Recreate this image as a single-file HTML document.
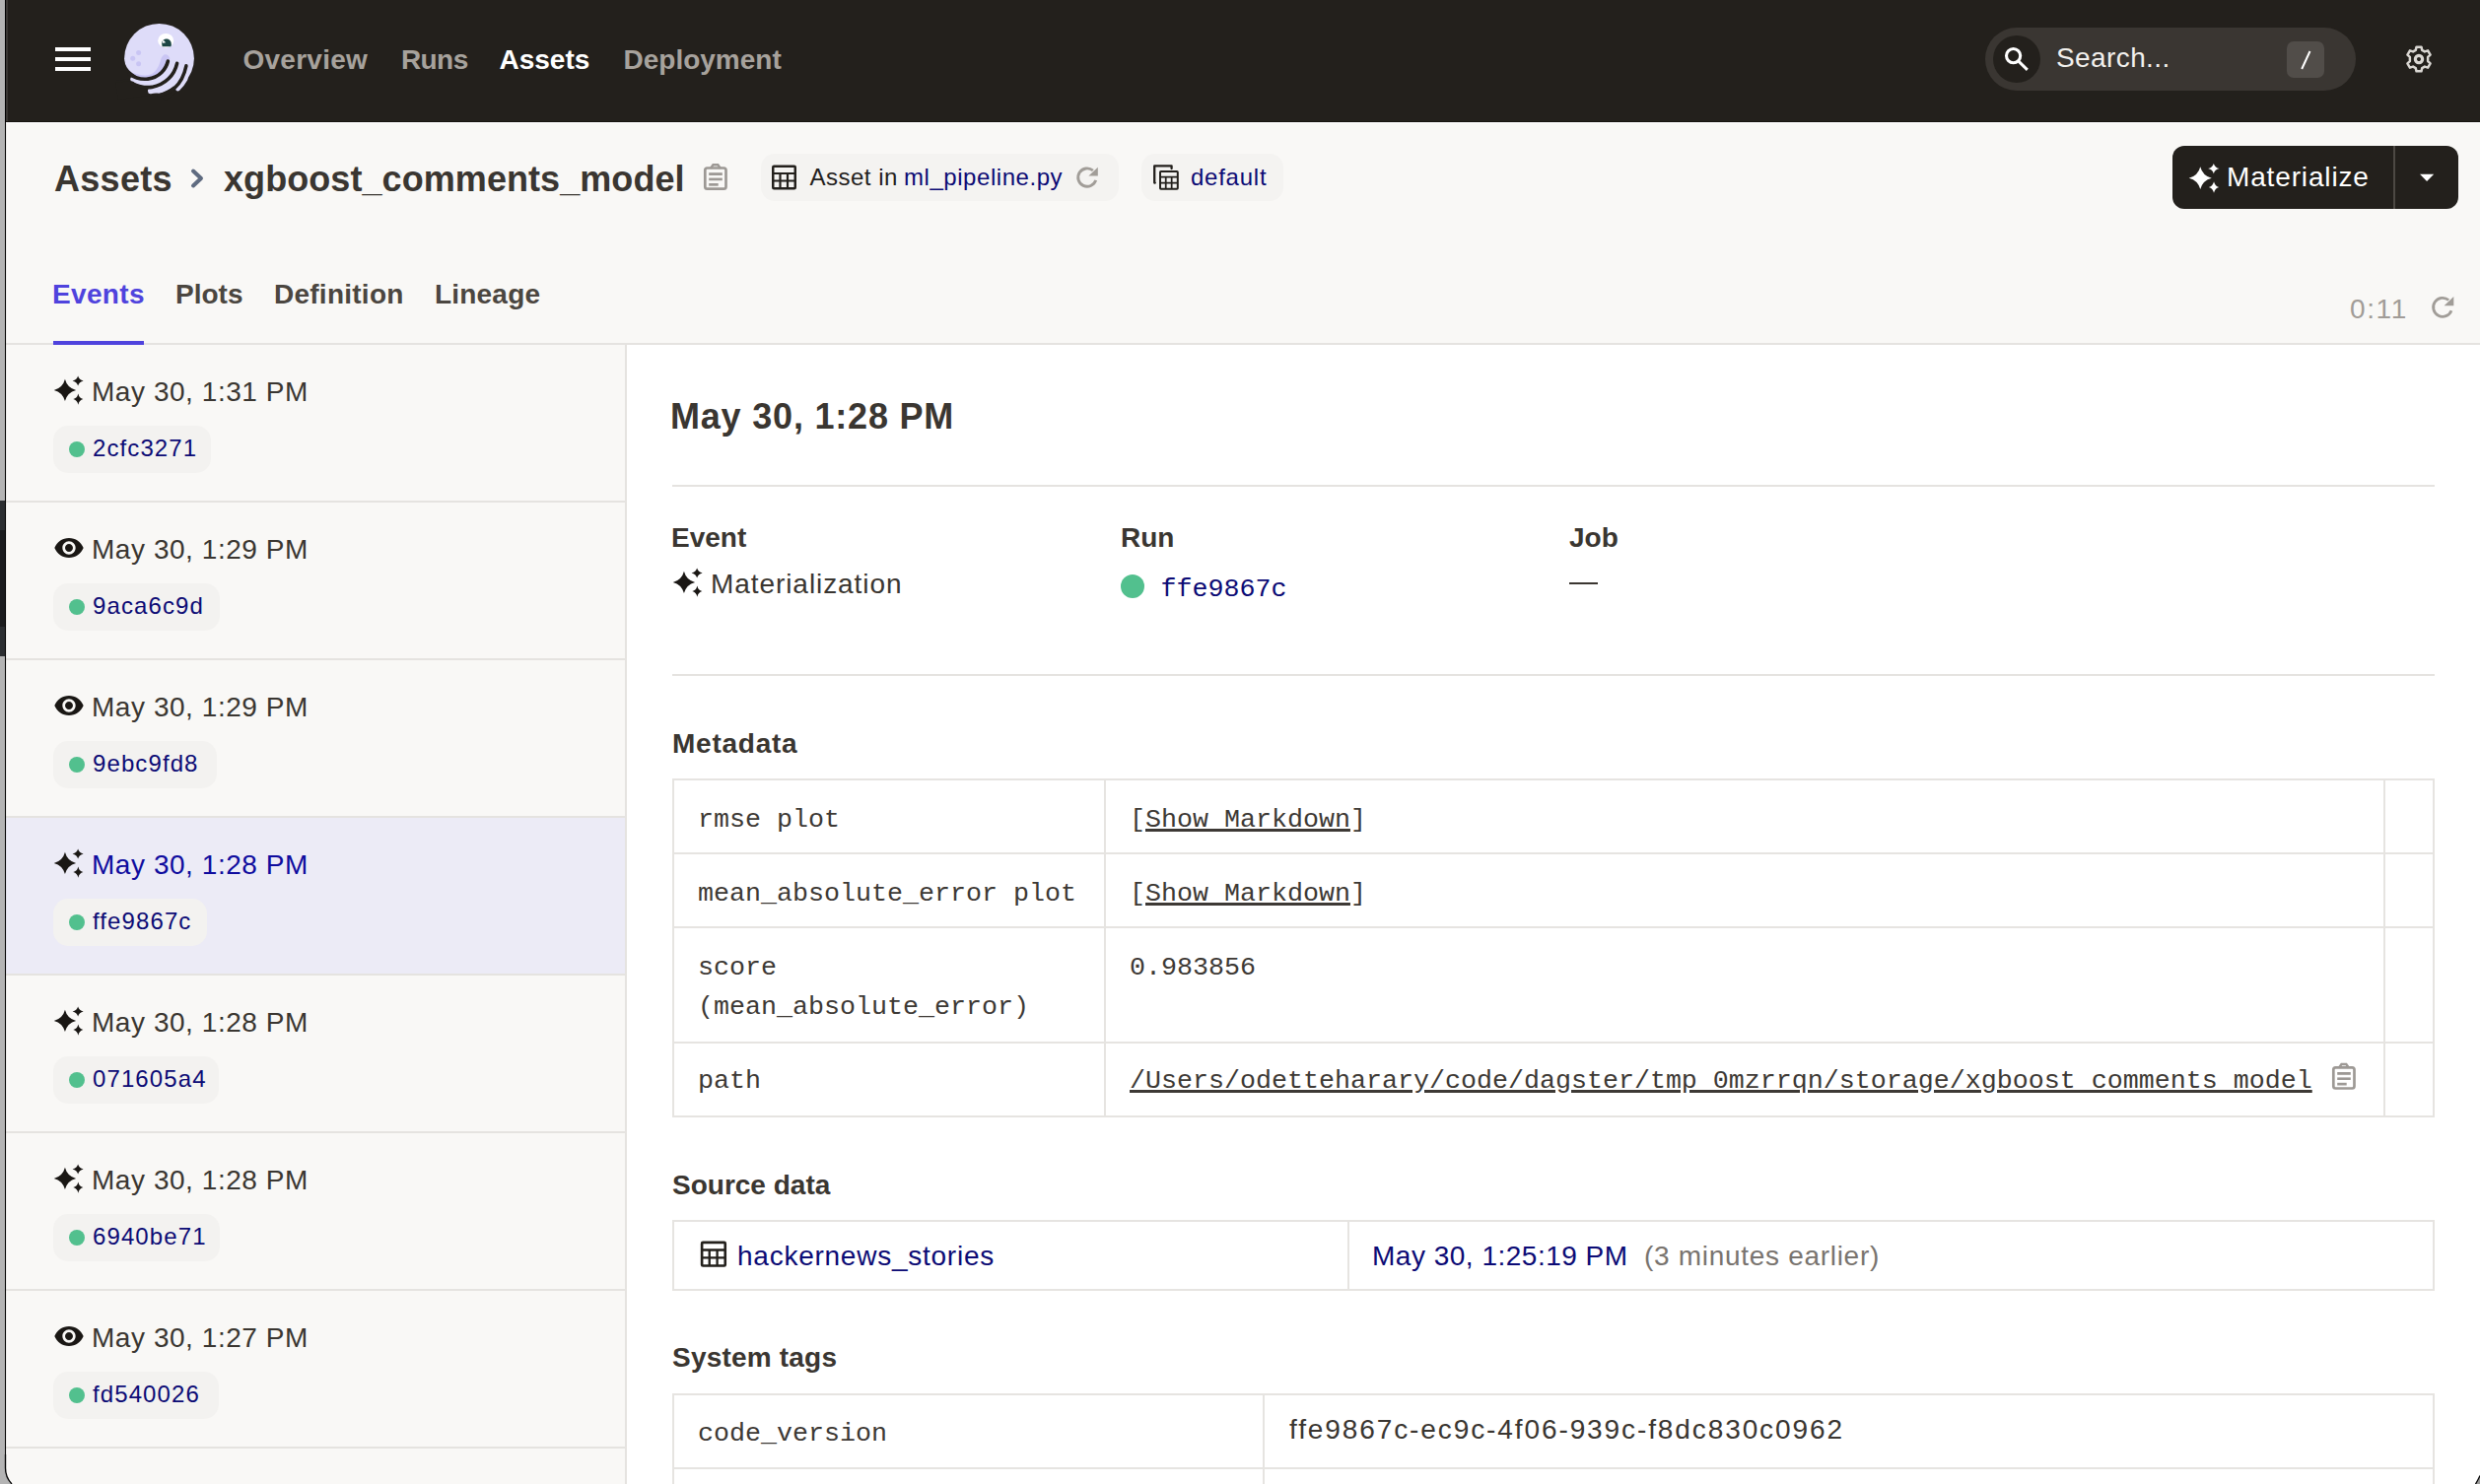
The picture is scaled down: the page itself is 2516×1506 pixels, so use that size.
<!DOCTYPE html>
<html><head><meta charset="utf-8">
<style>
html,body{margin:0;padding:0;}
body{width:2516px;height:1506px;overflow:hidden;position:relative;background:#f9f8f6;font-family:"Liberation Sans",sans-serif;}
.a{position:absolute;}
.t{position:absolute;white-space:nowrap;line-height:40px;font-family:"Liberation Sans",sans-serif;}
.m{position:absolute;white-space:nowrap;line-height:40px;font-family:"Liberation Mono",monospace;}
svg{position:absolute;overflow:visible;}
u{text-decoration-thickness:2.6px;text-underline-offset:2px;}
</style></head><body>
<div class="a" style="left:0px;top:0px;width:2516px;height:123px;background:#23201c;"></div>
<div class="a" style="left:0px;top:123px;width:2516px;height:1px;background:#16130f;"></div>
<div class="a" style="left:0px;top:124px;width:2516px;height:1px;background:#ffffff;"></div>
<div class="a" style="left:56px;top:48px;width:36px;height:4px;background:#ffffff;"></div>
<div class="a" style="left:56px;top:58px;width:36px;height:4px;background:#ffffff;"></div>
<div class="a" style="left:56px;top:68px;width:36px;height:4px;background:#ffffff;"></div>
<svg style="left:110px;top:15px;" width="100" height="95" viewBox="110 15 100 95">
<circle cx="161.5" cy="59.3" r="35.4" fill="#dedcf9"/>
<path d="M131,73.3 L135.4,77.1 L145.7,79.8 L154.3,78.8 L164.6,72.3 L170.7,61.3 L172.4,59.6 C171.5,56 169,55 167.5,55.3 C164.5,56 163.6,59 162.5,62.5 C161,67 159,72 154,75 C150,77 143,77 135,74 Z" fill="#c9c5f4"/>
<circle cx="140.6" cy="53.4" r="2.5" fill="#c9c5f4"/>
<circle cx="134.7" cy="59.3" r="2.5" fill="#c9c5f4"/>
<circle cx="140.6" cy="64.7" r="2.5" fill="#c9c5f4"/>
<path d="M125.8,61 C127,66 129.5,71 133.7,73.8 C135.5,75.2 137,76.2 138,77 L132,80 L118,82 L118,61 Z" fill="#23201c"/>
<path d="M131,82.3 Q140,86.8 150.5,88 L151.5,97 L120,101 L117,84 Z" fill="#23201c"/>
<path d="M160,96 Q170,92.8 176,87.5 L179,88 L179,94 L168,102 Z" fill="#23201c"/>
<circle cx="134.6" cy="80.4" r="2.4" fill="#dedcf9"/>
<path d="M152.8,92.4 Q160,91.6 166,88.6" stroke="#dedcf9" stroke-width="5.6" fill="none" stroke-linecap="round"/>
<path d="M180.4,89.8 Q185,85.5 188,80" stroke="#dedcf9" stroke-width="5" fill="none" stroke-linecap="round"/>
<path d="M170.4,62 C168.5,70 162,78.5 150,80.1 C142,81.1 136,78.5 131,75" stroke="#23201c" stroke-width="3.6" fill="none" stroke-linecap="round"/>
<path d="M179.6,64.3 C177,76 168,86 154,88.4 C146,89.4 140,87.5 134,84.5" stroke="#23201c" stroke-width="3.6" fill="none" stroke-linecap="round"/>
<path d="M188.9,66.8 C187,76 183,84 177,89.5 C173,92.5 168,95 161,97" stroke="#23201c" stroke-width="3.5" fill="none" stroke-linecap="round"/>
<ellipse cx="168.2" cy="41.2" rx="8" ry="7.3" fill="#ffffff"/>
<path d="M164.2,44.5 C164,41 166.5,39.6 169,39.6 C172,39.6 174,42 173.8,45.5 C173.7,46.5 173.5,47 173.3,47.3 L164.6,47.3 Z" fill="#1c4644"/>
<path d="M165.5,40.5 L168.2,43.2 L164.6,43.8 Z" fill="#ffffff"/>
</svg>
<div class="t" style="left:246.5px;top:40.60px;font-size:28px;color:#a7a29c;font-weight:700;letter-spacing:0.25px;">Overview</div>
<div class="t" style="left:407px;top:40.60px;font-size:28px;color:#a7a29c;font-weight:700;letter-spacing:-0.6px;">Runs</div>
<div class="t" style="left:506.5px;top:40.60px;font-size:28px;color:#ffffff;font-weight:700;">Assets</div>
<div class="t" style="left:632.5px;top:40.60px;font-size:28px;color:#a7a29c;font-weight:700;">Deployment</div>
<div class="a" style="left:2014px;top:28px;width:376px;height:64px;background:#3a3632;border-radius:32px;"></div>
<div class="a" style="left:2022px;top:36px;width:48px;height:48px;background:#23201c;border-radius:24px;"></div>
<svg style="left:2026px;top:40px;" width="40" height="40" viewBox="2026 40 40 40"><circle cx="2042.6" cy="56.6" r="7.1" stroke="#ffffff" stroke-width="3.1" fill="none"/><path d="M2047.6,61.9 L2056.8,70.9" stroke="#ffffff" stroke-width="2.9" stroke-linecap="butt"/></svg>
<div class="t" style="left:2086px;top:38.70px;font-size:28px;color:#f2f0ed;letter-spacing:0.4px;">Search...</div>
<div class="a" style="left:2320px;top:42px;width:38px;height:37px;background:#514d49;border-radius:7px;"></div>
<svg style="left:2320px;top:42px;" width="38" height="37" viewBox="2320 42 38 37"><path d="M2343.5,52 L2335.2,70" stroke="#ffffff" stroke-width="2" stroke-linecap="butt"/></svg>
<svg style="left:2436px;top:42px;" width="36" height="36" viewBox="2436 42 36 36"><g transform="translate(2454,60) scale(0.95)">
<path fill="none" stroke="#dad7d3" stroke-width="2.6" stroke-linejoin="round" d="M-2.6,-13 L2.6,-13 L3.4,-9.6 L6.2,-8 L9.6,-9.1 L12.2,-4.6 L9.6,-2.2 L9.6,2.2 L12.2,4.6 L9.6,9.1 L6.2,8 L3.4,9.6 L2.6,13 L-2.6,13 L-3.4,9.6 L-6.2,8 L-9.6,9.1 L-12.2,4.6 L-9.6,2.2 L-9.6,-2.2 L-12.2,-4.6 L-9.6,-9.1 L-6.2,-8 L-3.4,-9.6 Z"/>
<circle r="3.8" fill="none" stroke="#dad7d3" stroke-width="3.4"/></g></svg>
<div class="t" style="left:55px;top:161.83px;font-size:36px;color:#3a3631;font-weight:700;letter-spacing:0.3px;">Assets</div>
<svg style="left:188px;top:164px;" width="24" height="32" viewBox="188 164 24 32"><path d="M196,173.5 L204,181 L196,188.5" stroke="#5f6b80" stroke-width="4" fill="none" stroke-linecap="round" stroke-linejoin="round"/></svg>
<div class="t" style="left:227px;top:161.83px;font-size:36px;color:#3a3631;font-weight:700;letter-spacing:0.07px;">xgboost_comments_model</div>
<svg style="left:710px;top:164px;" width="32" height="34" viewBox="710 164 32 34"><rect x="715.3" y="170.5" width="21.2" height="21.2" rx="2.2" stroke="#9d9995" stroke-width="2.7" fill="none"/>
<path d="M721,170.7 L723.5,167.2 L728.3,167.2 L730.8,170.7" stroke="#9d9995" stroke-width="2.4" fill="none"/>
<rect x="719.2" y="175.2" width="13.6" height="2.8" fill="#9d9995"/>
<rect x="719.2" y="180.6" width="13.6" height="2.6" fill="#9d9995"/>
<rect x="719.2" y="186.0" width="9.5" height="2.7" fill="#9d9995"/></svg>
<div class="a" style="left:772px;top:156px;width:363px;height:48px;background:#f4f3f1;border-radius:14px;"></div>
<svg style="left:780px;top:164px;" width="32" height="32" viewBox="780 164 32 32"><rect x="784.25" y="168.75" width="22.5" height="22.5" stroke="#23201c" stroke-width="2.5" fill="none" rx="1.0"/>
<path d="M784.25,176.0 H806.75 M784.25,183.5 H806.75 M791.5,176.0 V191.25 M799.0,176.0 V191.25" stroke="#23201c" stroke-width="2.2" fill="none"/></svg>
<div class="t" style="left:821.5px;top:159.58px;font-size:24px;color:#23201c;letter-spacing:0.5px;">Asset in</div>
<div class="t" style="left:917px;top:159.58px;font-size:24px;color:#0c0b75;letter-spacing:0.55px;">ml_pipeline.py</div>
<svg style="left:1088px;top:165px;" width="30" height="30" viewBox="1088 165 30 30"><path d="M1111.70,182.89 A9.2,9.2 0 1 1 1108.86,173.00" stroke="#a19d98" stroke-width="2.9" fill="none"/><path d="M1104.40,178.60 L1113.80,169.70 L1113.80,178.60 Z" fill="#a19d98"/></svg>
<div class="a" style="left:1158px;top:156px;width:144px;height:48px;background:#f4f3f1;border-radius:14px;"></div>
<svg style="left:1166px;top:164px;" width="34" height="34" viewBox="1166 164 34 34"><path d="M1171.8,185.6 L1171.2,185.6 L1171.2,168.4 L1188.6,168.4 L1188.6,171" stroke="#23201c" stroke-width="2.3" fill="none" stroke-linejoin="round" stroke-linecap="round"/>
<rect x="1176.99" y="173.99" width="17.82" height="17.82" stroke="#23201c" stroke-width="1.98" fill="none" rx="0.792"/>
<path d="M1176.99,179.732 H1194.81 M1176.99,185.672 H1194.81 M1182.732,179.732 V191.81 M1188.672,179.732 V191.81" stroke="#23201c" stroke-width="1.7424000000000002" fill="none"/></svg>
<div class="t" style="left:1208px;top:159.58px;font-size:24px;color:#0c0b75;letter-spacing:0.75px;">default</div>
<div class="a" style="left:2204px;top:148px;width:290px;height:64px;background:#23201c;border-radius:12px;"></div>
<div class="a" style="left:2428px;top:148px;width:2px;height:64px;background:#4d4944;"></div>
<svg style="left:2216px;top:160px;" width="40" height="40" viewBox="2216 160 40 40"><g transform="translate(2220,164.3) scale(1.37)" fill="#ffffff">
<path d="M8.95,3.5999999999999996 Q10.629999999999999,10.28 17.35,11.95 Q10.629999999999999,13.62 8.95,20.299999999999997 Q7.27,13.62 0.5499999999999989,11.95 Q7.27,10.28 8.95,3.5999999999999996 Z"/>
<path d="M18.85,1.1500000000000004 Q19.68,4.15 23.0,4.9 Q19.68,5.65 18.85,8.65 Q18.020000000000003,5.65 14.700000000000001,4.9 Q18.020000000000003,4.15 18.85,1.1500000000000004 Z"/>
<path d="M19.0,14.600000000000001 Q19.75,17.96 22.75,18.8 Q19.75,19.64 19.0,23.0 Q18.25,19.64 15.25,18.8 Q18.25,17.96 19.0,14.600000000000001 Z"/>
</g></svg>
<div class="t" style="left:2259px;top:160.20px;font-size:28px;color:#ffffff;letter-spacing:0.85px;">Materialize</div>
<svg style="left:2450px;top:170px;" width="24" height="20" viewBox="2450 170 24 20"><path d="M2455,176.8 L2469.2,176.8 L2462.1,184 Z" fill="#ffffff"/></svg>
<div class="t" style="left:53px;top:278.60px;font-size:28px;color:#4f43dd;font-weight:700;letter-spacing:0.35px;">Events</div>
<div class="t" style="left:178px;top:278.60px;font-size:28px;color:#4b4640;font-weight:700;">Plots</div>
<div class="t" style="left:278px;top:278.60px;font-size:28px;color:#4b4640;font-weight:700;letter-spacing:0.25px;">Definition</div>
<div class="t" style="left:441px;top:278.60px;font-size:28px;color:#4b4640;font-weight:700;letter-spacing:0.2px;">Lineage</div>
<div class="a" style="left:0px;top:348px;width:2516px;height:2px;background:#e5e3e0;"></div>
<div class="a" style="left:54px;top:346px;width:92px;height:4px;background:#4f43dd;"></div>
<div class="t" style="left:2384px;top:294.30px;font-size:28px;color:#a19c97;letter-spacing:1.6px;">0:11</div>
<svg style="left:2462px;top:296px;" width="32" height="32" viewBox="2462 296 32 32"><path d="M2486.97,315.20 A9.5,9.5 0 1 1 2484.21,304.52" stroke="#a19d98" stroke-width="2.8" fill="none"/><path d="M2479.60,310.30 L2489.30,301.11 L2489.30,310.30 Z" fill="#a19d98"/></svg>
<div class="a" style="left:634px;top:350px;width:2px;height:1156px;background:#e5e3e0;"></div>
<div class="a" style="left:0px;top:508px;width:634px;height:2px;background:#e5e3e0;"></div>
<svg style="left:52px;top:378px;" width="36" height="36" viewBox="52 378 36 36"><g transform="translate(54,380) scale(1.3333)" fill="#1a1714">
<path d="M8.95,3.5999999999999996 Q10.629999999999999,10.28 17.35,11.95 Q10.629999999999999,13.62 8.95,20.299999999999997 Q7.27,13.62 0.5499999999999989,11.95 Q7.27,10.28 8.95,3.5999999999999996 Z"/>
<path d="M18.85,1.1500000000000004 Q19.68,4.15 23.0,4.9 Q19.68,5.65 18.85,8.65 Q18.020000000000003,5.65 14.700000000000001,4.9 Q18.020000000000003,4.15 18.85,1.1500000000000004 Z"/>
<path d="M19.0,14.600000000000001 Q19.75,17.96 22.75,18.8 Q19.75,19.64 19.0,23.0 Q18.25,19.64 15.25,18.8 Q18.25,17.96 19.0,14.600000000000001 Z"/>
</g></svg>
<div class="t" style="left:93px;top:377.80px;font-size:28px;color:#3a3631;letter-spacing:0.55px;">May 30, 1:31 PM</div>
<div class="a" style="left:54px;top:432px;width:160px;height:48px;background:#f3f2f0;border-radius:15px;"></div>
<div class="a" style="left:70px;top:448px;width:16px;height:16px;background:#52c08e;border-radius:8px;"></div>
<div class="t" style="left:94px;top:435.48px;font-size:24px;color:#0c0b75;letter-spacing:1.1px;">2cfc3271</div>
<div class="a" style="left:0px;top:668px;width:634px;height:2px;background:#e5e3e0;"></div>
<svg style="left:52px;top:538px;" width="36" height="36" viewBox="52 538 36 36"><g transform="translate(54,540) scale(1.3333)" fill="#1a1714"><path d="M12 4.5C7 4.5 2.73 7.61 1 12c1.73 4.39 6 7.5 11 7.5s9.27-3.11 11-7.5c-1.73-4.39-6-7.5-11-7.5zM12 17c-2.76 0-5-2.24-5-5s2.24-5 5-5 5 2.24 5 5-2.24 5-5 5zm0-8c-1.66 0-3 1.34-3 3s1.34 3 3 3 3-1.34 3-3-1.34-3-3-3z"/></g></svg>
<div class="t" style="left:93px;top:537.80px;font-size:28px;color:#3a3631;letter-spacing:0.55px;">May 30, 1:29 PM</div>
<div class="a" style="left:54px;top:592px;width:169px;height:48px;background:#f3f2f0;border-radius:15px;"></div>
<div class="a" style="left:70px;top:608px;width:16px;height:16px;background:#52c08e;border-radius:8px;"></div>
<div class="t" style="left:94px;top:595.48px;font-size:24px;color:#0c0b75;letter-spacing:1.1px;">9aca6c9d</div>
<div class="a" style="left:0px;top:828px;width:634px;height:2px;background:#e5e3e0;"></div>
<svg style="left:52px;top:698px;" width="36" height="36" viewBox="52 698 36 36"><g transform="translate(54,700) scale(1.3333)" fill="#1a1714"><path d="M12 4.5C7 4.5 2.73 7.61 1 12c1.73 4.39 6 7.5 11 7.5s9.27-3.11 11-7.5c-1.73-4.39-6-7.5-11-7.5zM12 17c-2.76 0-5-2.24-5-5s2.24-5 5-5 5 2.24 5 5-2.24 5-5 5zm0-8c-1.66 0-3 1.34-3 3s1.34 3 3 3 3-1.34 3-3-1.34-3-3-3z"/></g></svg>
<div class="t" style="left:93px;top:697.80px;font-size:28px;color:#3a3631;letter-spacing:0.55px;">May 30, 1:29 PM</div>
<div class="a" style="left:54px;top:752px;width:166px;height:48px;background:#f3f2f0;border-radius:15px;"></div>
<div class="a" style="left:70px;top:768px;width:16px;height:16px;background:#52c08e;border-radius:8px;"></div>
<div class="t" style="left:94px;top:755.48px;font-size:24px;color:#0c0b75;letter-spacing:1.1px;">9ebc9fd8</div>
<div class="a" style="left:0px;top:830px;width:634px;height:158px;background:#ecebf6;"></div>
<div class="a" style="left:0px;top:988px;width:634px;height:2px;background:#e5e3e0;"></div>
<svg style="left:52px;top:858px;" width="36" height="36" viewBox="52 858 36 36"><g transform="translate(54,860) scale(1.3333)" fill="#1a1714">
<path d="M8.95,3.5999999999999996 Q10.629999999999999,10.28 17.35,11.95 Q10.629999999999999,13.62 8.95,20.299999999999997 Q7.27,13.62 0.5499999999999989,11.95 Q7.27,10.28 8.95,3.5999999999999996 Z"/>
<path d="M18.85,1.1500000000000004 Q19.68,4.15 23.0,4.9 Q19.68,5.65 18.85,8.65 Q18.020000000000003,5.65 14.700000000000001,4.9 Q18.020000000000003,4.15 18.85,1.1500000000000004 Z"/>
<path d="M19.0,14.600000000000001 Q19.75,17.96 22.75,18.8 Q19.75,19.64 19.0,23.0 Q18.25,19.64 15.25,18.8 Q18.25,17.96 19.0,14.600000000000001 Z"/>
</g></svg>
<div class="t" style="left:93px;top:857.80px;font-size:28px;color:#0f0c9e;letter-spacing:0.55px;">May 30, 1:28 PM</div>
<div class="a" style="left:54px;top:912px;width:156px;height:48px;background:#f3f2f0;border-radius:15px;"></div>
<div class="a" style="left:70px;top:928px;width:16px;height:16px;background:#52c08e;border-radius:8px;"></div>
<div class="t" style="left:94px;top:915.48px;font-size:24px;color:#0c0b75;letter-spacing:1.1px;">ffe9867c</div>
<div class="a" style="left:0px;top:1148px;width:634px;height:2px;background:#e5e3e0;"></div>
<svg style="left:52px;top:1018px;" width="36" height="36" viewBox="52 1018 36 36"><g transform="translate(54,1020) scale(1.3333)" fill="#1a1714">
<path d="M8.95,3.5999999999999996 Q10.629999999999999,10.28 17.35,11.95 Q10.629999999999999,13.62 8.95,20.299999999999997 Q7.27,13.62 0.5499999999999989,11.95 Q7.27,10.28 8.95,3.5999999999999996 Z"/>
<path d="M18.85,1.1500000000000004 Q19.68,4.15 23.0,4.9 Q19.68,5.65 18.85,8.65 Q18.020000000000003,5.65 14.700000000000001,4.9 Q18.020000000000003,4.15 18.85,1.1500000000000004 Z"/>
<path d="M19.0,14.600000000000001 Q19.75,17.96 22.75,18.8 Q19.75,19.64 19.0,23.0 Q18.25,19.64 15.25,18.8 Q18.25,17.96 19.0,14.600000000000001 Z"/>
</g></svg>
<div class="t" style="left:93px;top:1017.80px;font-size:28px;color:#3a3631;letter-spacing:0.55px;">May 30, 1:28 PM</div>
<div class="a" style="left:54px;top:1072px;width:168px;height:48px;background:#f3f2f0;border-radius:15px;"></div>
<div class="a" style="left:70px;top:1088px;width:16px;height:16px;background:#52c08e;border-radius:8px;"></div>
<div class="t" style="left:94px;top:1075.48px;font-size:24px;color:#0c0b75;letter-spacing:1.1px;">071605a4</div>
<div class="a" style="left:0px;top:1308px;width:634px;height:2px;background:#e5e3e0;"></div>
<svg style="left:52px;top:1178px;" width="36" height="36" viewBox="52 1178 36 36"><g transform="translate(54,1180) scale(1.3333)" fill="#1a1714">
<path d="M8.95,3.5999999999999996 Q10.629999999999999,10.28 17.35,11.95 Q10.629999999999999,13.62 8.95,20.299999999999997 Q7.27,13.62 0.5499999999999989,11.95 Q7.27,10.28 8.95,3.5999999999999996 Z"/>
<path d="M18.85,1.1500000000000004 Q19.68,4.15 23.0,4.9 Q19.68,5.65 18.85,8.65 Q18.020000000000003,5.65 14.700000000000001,4.9 Q18.020000000000003,4.15 18.85,1.1500000000000004 Z"/>
<path d="M19.0,14.600000000000001 Q19.75,17.96 22.75,18.8 Q19.75,19.64 19.0,23.0 Q18.25,19.64 15.25,18.8 Q18.25,17.96 19.0,14.600000000000001 Z"/>
</g></svg>
<div class="t" style="left:93px;top:1177.80px;font-size:28px;color:#3a3631;letter-spacing:0.55px;">May 30, 1:28 PM</div>
<div class="a" style="left:54px;top:1232px;width:169px;height:48px;background:#f3f2f0;border-radius:15px;"></div>
<div class="a" style="left:70px;top:1248px;width:16px;height:16px;background:#52c08e;border-radius:8px;"></div>
<div class="t" style="left:94px;top:1235.48px;font-size:24px;color:#0c0b75;letter-spacing:1.1px;">6940be71</div>
<div class="a" style="left:0px;top:1468px;width:634px;height:2px;background:#e5e3e0;"></div>
<svg style="left:52px;top:1338px;" width="36" height="36" viewBox="52 1338 36 36"><g transform="translate(54,1340) scale(1.3333)" fill="#1a1714"><path d="M12 4.5C7 4.5 2.73 7.61 1 12c1.73 4.39 6 7.5 11 7.5s9.27-3.11 11-7.5c-1.73-4.39-6-7.5-11-7.5zM12 17c-2.76 0-5-2.24-5-5s2.24-5 5-5 5 2.24 5 5-2.24 5-5 5zm0-8c-1.66 0-3 1.34-3 3s1.34 3 3 3 3-1.34 3-3-1.34-3-3-3z"/></g></svg>
<div class="t" style="left:93px;top:1337.80px;font-size:28px;color:#3a3631;letter-spacing:0.55px;">May 30, 1:27 PM</div>
<div class="a" style="left:54px;top:1392px;width:168px;height:48px;background:#f3f2f0;border-radius:15px;"></div>
<div class="a" style="left:70px;top:1408px;width:16px;height:16px;background:#52c08e;border-radius:8px;"></div>
<div class="t" style="left:94px;top:1395.48px;font-size:24px;color:#0c0b75;letter-spacing:1.1px;">fd540026</div>
<div class="a" style="left:636px;top:350px;width:1880px;height:1156px;background:#ffffff;"></div>
<div class="t" style="left:680px;top:403.33px;font-size:36px;color:#3a3631;font-weight:700;letter-spacing:0.8px;">May 30, 1:28 PM</div>
<div class="a" style="left:682px;top:492px;width:1788px;height:2px;background:#e5e3e0;"></div>
<div class="t" style="left:681px;top:526.30px;font-size:28px;color:#3a3631;font-weight:700;">Event</div>
<div class="t" style="left:1137px;top:526.30px;font-size:28px;color:#3a3631;font-weight:700;">Run</div>
<div class="t" style="left:1592px;top:526.30px;font-size:28px;color:#3a3631;font-weight:700;">Job</div>
<svg style="left:680px;top:574px;" width="36" height="36" viewBox="680 574 36 36"><g transform="translate(682,575) scale(1.3333)" fill="#1a1714">
<path d="M8.95,3.5999999999999996 Q10.629999999999999,10.28 17.35,11.95 Q10.629999999999999,13.62 8.95,20.299999999999997 Q7.27,13.62 0.5499999999999989,11.95 Q7.27,10.28 8.95,3.5999999999999996 Z"/>
<path d="M18.85,1.1500000000000004 Q19.68,4.15 23.0,4.9 Q19.68,5.65 18.85,8.65 Q18.020000000000003,5.65 14.700000000000001,4.9 Q18.020000000000003,4.15 18.85,1.1500000000000004 Z"/>
<path d="M19.0,14.600000000000001 Q19.75,17.96 22.75,18.8 Q19.75,19.64 19.0,23.0 Q18.25,19.64 15.25,18.8 Q18.25,17.96 19.0,14.600000000000001 Z"/>
</g></svg>
<div class="t" style="left:721px;top:573.30px;font-size:28px;color:#3a3631;letter-spacing:0.93px;">Materialization</div>
<div class="a" style="left:1137px;top:583px;width:24px;height:24px;background:#52c08e;border-radius:12px;"></div>
<div class="m" style="left:1177.5px;top:577.69px;font-size:26.67px;color:#0c0b75;">ffe9867c</div>
<div class="a" style="left:1592px;top:591px;width:29px;height:2px;background:#3a3631;"></div>
<div class="a" style="left:682px;top:684px;width:1788px;height:2px;background:#e5e3e0;"></div>
<div class="t" style="left:682px;top:735.10px;font-size:28px;color:#3a3631;font-weight:700;letter-spacing:0.75px;">Metadata</div>
<div class="a" style="left:682px;top:790px;width:1788px;height:2px;background:#e6e4e1;"></div>
<div class="a" style="left:682px;top:1132px;width:1788px;height:2px;background:#e6e4e1;"></div>
<div class="a" style="left:682px;top:865px;width:1788px;height:2px;background:#e6e4e1;"></div>
<div class="a" style="left:682px;top:940px;width:1788px;height:2px;background:#e6e4e1;"></div>
<div class="a" style="left:682px;top:1057px;width:1788px;height:2px;background:#e6e4e1;"></div>
<div class="a" style="left:682px;top:790px;width:2px;height:344px;background:#e6e4e1;"></div>
<div class="a" style="left:2468px;top:790px;width:2px;height:344px;background:#e6e4e1;"></div>
<div class="a" style="left:1120px;top:790px;width:2px;height:344px;background:#e6e4e1;"></div>
<div class="a" style="left:2418px;top:790px;width:2px;height:344px;background:#e6e4e1;"></div>
<div class="m" style="left:708px;top:812.29px;font-size:26.67px;color:#3d3935;">rmse plot</div>
<div class="m" style="left:708px;top:887.29px;font-size:26.67px;color:#3d3935;">mean_absolute_error plot</div>
<div class="m" style="left:708px;top:962.29px;font-size:26.67px;color:#3d3935;">score</div>
<div class="m" style="left:708px;top:1002.29px;font-size:26.67px;color:#3d3935;">(mean_absolute_error)</div>
<div class="m" style="left:708px;top:1077.29px;font-size:26.67px;color:#3d3935;">path</div>
<div class="m" style="left:1146px;top:812.29px;font-size:26.67px;color:#3d3935;">[<u>Show Markdown</u>]</div>
<div class="m" style="left:1146px;top:887.29px;font-size:26.67px;color:#3d3935;">[<u>Show Markdown</u>]</div>
<div class="m" style="left:1146px;top:962.29px;font-size:26.67px;color:#3d3935;">0.983856</div>
<div class="m" style="left:1146px;top:1077.29px;font-size:26.67px;color:#3d3935;"><u>/Users/odetteharary/code/dagster/tmp_0mzrrqn/storage/xgboost_comments_model</u></div>
<svg style="left:2362px;top:1076px;" width="34" height="34" viewBox="2362 1076 34 34"><rect x="2367.3" y="1083.3" width="21.2" height="21.2" rx="2.2" stroke="#9d9995" stroke-width="2.7" fill="none"/>
<path d="M2373,1083.5 L2375.5,1080 L2380.3,1080 L2382.8,1083.5" stroke="#9d9995" stroke-width="2.4" fill="none"/>
<rect x="2371.2" y="1088" width="13.6" height="2.8" fill="#9d9995"/>
<rect x="2371.2" y="1093.4" width="13.6" height="2.6" fill="#9d9995"/>
<rect x="2371.2" y="1098.8" width="9.5" height="2.7" fill="#9d9995"/></svg>
<div class="t" style="left:682px;top:1182.70px;font-size:28px;color:#3a3631;font-weight:700;">Source data</div>
<div class="a" style="left:682px;top:1238px;width:1788px;height:2px;background:#e6e4e1;"></div>
<div class="a" style="left:682px;top:1308px;width:1788px;height:2px;background:#e6e4e1;"></div>
<div class="a" style="left:682px;top:1238px;width:2px;height:72px;background:#e6e4e1;"></div>
<div class="a" style="left:2468px;top:1238px;width:2px;height:72px;background:#e6e4e1;"></div>
<div class="a" style="left:1367px;top:1238px;width:2px;height:72px;background:#e6e4e1;"></div>
<svg style="left:706px;top:1256px;" width="34" height="34" viewBox="706 1256 34 34"><rect x="712.1125" y="1260.9125" width="23.625" height="23.625" stroke="#23201c" stroke-width="2.625" fill="none" rx="1.05"/>
<path d="M712.1125,1268.5249999999999 H735.7375 M712.1125,1276.3999999999999 H735.7375 M719.7249999999999,1268.5249999999999 V1284.5375 M727.5999999999999,1268.5249999999999 V1284.5375" stroke="#23201c" stroke-width="2.3100000000000005" fill="none"/></svg>
<div class="t" style="left:748px;top:1255.10px;font-size:28px;color:#0c0b75;letter-spacing:0.75px;">hackernews_stories</div>
<div class="t" style="left:1392px;top:1255.10px;font-size:28px;color:#0c0b75;letter-spacing:0.5px;">May 30, 1:25:19 PM</div>
<div class="t" style="left:1668px;top:1255.10px;font-size:28px;color:#79746f;letter-spacing:0.7px;">(3 minutes earlier)</div>
<div class="t" style="left:682px;top:1358.30px;font-size:28px;color:#3a3631;font-weight:700;letter-spacing:0.2px;">System tags</div>
<div class="a" style="left:682px;top:1414px;width:1788px;height:2px;background:#e6e4e1;"></div>
<div class="a" style="left:682px;top:1489px;width:1788px;height:2px;background:#e6e4e1;"></div>
<div class="a" style="left:682px;top:1414px;width:2px;height:92px;background:#e6e4e1;"></div>
<div class="a" style="left:2468px;top:1414px;width:2px;height:92px;background:#e6e4e1;"></div>
<div class="a" style="left:1281px;top:1414px;width:2px;height:92px;background:#e6e4e1;"></div>
<div class="m" style="left:708px;top:1435.39px;font-size:26.67px;color:#3d3935;">code_version</div>
<div class="t" style="left:1308px;top:1430.80px;font-size:28px;color:#3a3631;letter-spacing:1.9px;">ffe9867c-ec9c-4f06-939c-f8dc830c0962</div>
<div class="a" style="left:0px;top:0px;width:5px;height:1506px;background:#b4b4b4;"></div>
<div class="a" style="left:0px;top:508px;width:5px;height:158px;background:#1b1c1e;"></div>
<div class="a" style="left:0px;top:508px;width:5px;height:30px;background:#2b2e31;"></div>
<div class="a" style="left:0px;top:636px;width:5px;height:30px;background:#2b2e31;"></div>
<div class="a" style="left:5px;top:0px;width:1px;height:1506px;background:#000000;"></div>
<div class="a" style="left:6px;top:0px;width:2px;height:123px;background:rgba(255,255,255,0.10);"></div>
<div class="a" style="left:6px;top:125px;width:1px;height:1381px;background:rgba(0,0,0,0.05);"></div>
<svg style="left:0px;top:1476px;" width="40" height="30" viewBox="0 1476 40 30"><path d="M0,1476 L5.5,1476 L5.5,1490 A23,23 0 0 0 12,1506 L0,1506 Z" fill="#b4b4b4"/><path d="M5.5,1476 L5.5,1490 A23,23 0 0 0 12,1506" stroke="#000" stroke-width="1.3" fill="none"/></svg>
<svg style="left:2500px;top:1490px;" width="16" height="16" viewBox="2500 1490 16 16"><path d="M2516,1497.5 Q2514.5,1501 2511.5,1506 L2516,1506 Z" fill="#9a9a9a"/><path d="M2516,1497.5 Q2514.5,1501 2511.5,1506" stroke="#000" stroke-width="1.3" fill="none"/></svg>
</body></html>
